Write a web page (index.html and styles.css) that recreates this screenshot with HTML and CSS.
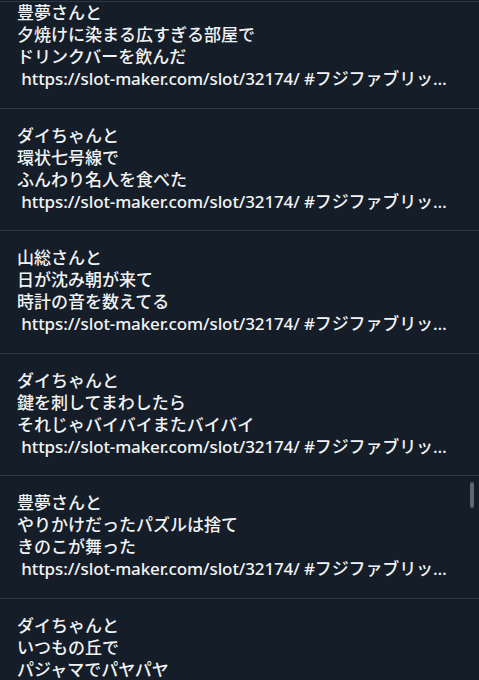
FILE: index.html
```html
<!DOCTYPE html>
<html lang="ja">
<head>
<meta charset="utf-8">
<link rel="stylesheet" href="styles.css">
</head>
<body>
<div class="page">
  <div class="topbar"></div>
  <div class="list">
    <div class="item first">
      <p class="line">豊夢さんと</p>
      <p class="line">夕焼けに染まる広すぎる部屋で</p>
      <p class="line">ドリンクバーを飲んだ</p>
      <p class="line url"> https://slot-maker.com/slot/32174/ #フジファブリッ…</p>
    </div>
    <div class="item">
      <p class="line">ダイちゃんと</p>
      <p class="line">環状七号線で</p>
      <p class="line">ふんわり名人を食べた</p>
      <p class="line url"> https://slot-maker.com/slot/32174/ #フジファブリッ…</p>
    </div>
    <div class="item">
      <p class="line">山総さんと</p>
      <p class="line">日が沈み朝が来て</p>
      <p class="line">時計の音を数えてる</p>
      <p class="line url"> https://slot-maker.com/slot/32174/ #フジファブリッ…</p>
    </div>
    <div class="item">
      <p class="line">ダイちゃんと</p>
      <p class="line">鍵を刺してまわしたら</p>
      <p class="line">それじゃバイバイまたバイバイ</p>
      <p class="line url"> https://slot-maker.com/slot/32174/ #フジファブリッ…</p>
    </div>
    <div class="item">
      <p class="line">豊夢さんと</p>
      <p class="line">やりかけだったパズルは捨て</p>
      <p class="line">きのこが舞った</p>
      <p class="line url"> https://slot-maker.com/slot/32174/ #フジファブリッ…</p>
    </div>
    <div class="item">
      <p class="line">ダイちゃんと</p>
      <p class="line">いつもの丘で</p>
      <p class="line">パジャマでパヤパヤ</p>
      <p class="line url"> https://slot-maker.com/slot/32174/ #フジファブリッ…</p>
    </div>
  </div>
  <div class="scrollthumb"></div>
</div>
</body>
</html>
```
FILE: styles.css
```css
html, body {
  margin: 0;
  padding: 0;
  background: #151e28;
}
body {
  width: 479px;
  height: 680px;
  overflow: hidden;
}
.page {
  position: relative;
  width: 479px;
  height: 680px;
  overflow: hidden;
  background: #151e28;
  font-family: "Noto Sans", "Noto Sans CJK JP", sans-serif;
  font-weight: 500;
  color: #f2f3f4;
  font-size: 17px;
}
.topbar {
  height: 1px;
  border-bottom: 1px solid #2c3844;
}
.list {
  display: flex;
  flex-direction: column;
}
.item {
  padding: 16px 0 17.5px 17px;
  border-bottom: 1px solid #2c3844;
}
.item.first {
  padding-top: 0;
}
.line {
  margin: 0;
  line-height: 22px;
  white-space: pre;
}
.url {
  letter-spacing: -0.12px;
}
.scrollthumb {
  position: absolute;
  left: 470px;
  top: 482px;
  width: 4px;
  height: 26px;
  border-radius: 2px;
  background: #5d6670;
}
```
